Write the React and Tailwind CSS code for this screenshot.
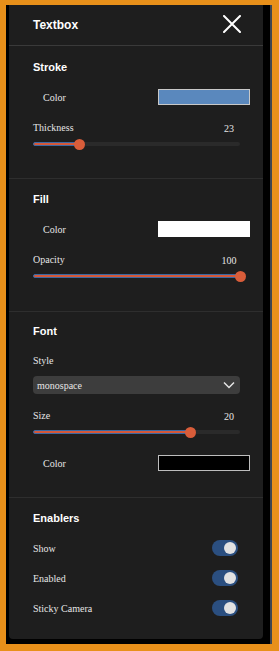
import React from 'react';

const serif = { fontFamily: '"Liberation Serif", "Times New Roman", serif' };

const Slider = ({ pct }) => (
  <div className="relative mr-[23px] h-[12px] flex items-center">
    <div className="h-[4px] w-full rounded-full bg-[#2a2a2a]" />
    <div
      className="absolute left-0 h-[4px] rounded-full bg-[#d4583a] border border-[#3b68a3]"
      style={{ width: `${pct}%` }}
    />
    <div
      className="absolute h-[11px] w-[11px] -ml-[5.5px] rounded-full bg-[#d95d3a]"
      style={{ left: `${pct}%` }}
    />
  </div>
);

const ColorRow = ({ color, border }) => (
  <div className="flex items-center justify-between h-[16px] pl-[10px] pr-[13px]">
    <span className="text-[10px] text-[#e6e6e6]" style={serif}>Color</span>
    <div className={`w-[92px] h-[16px] border ${border}`} style={{ backgroundColor: color }} />
  </div>
);

const ValueRow = ({ label, value }) => (
  <div className="flex items-center justify-between h-[16px] pr-[19px]">
    <span className="text-[10px] text-[#e6e6e6]" style={serif}>{label}</span>
    <span className="w-[30px] text-center text-[10px] text-[#e6e6e6] mt-[2px]" style={serif}>{value}</span>
  </div>
);

const Title = ({ children }) => (
  <div className="h-[16px] flex items-center text-[11px] font-bold text-white">{children}</div>
);

const Toggle = () => (
  <div className="w-[26px] h-[16px] rounded-full bg-[#2b4f80] flex items-center justify-end pr-[2px] mr-[25px]">
    <div className="w-[12px] h-[12px] rounded-full bg-[#e2e2e2]" />
  </div>
);

const ToggleRow = ({ label }) => (
  <div className="flex items-center justify-between h-[16px]">
    <span className="text-[10px] text-[#e6e6e6]" style={serif}>{label}</span>
    <Toggle />
  </div>
);

export default function App() {
  return (
    <div
      className="w-[279px] h-[651px] bg-[#e8901a] pl-[6px] pt-[5px]"
      style={{ fontFamily: '"Liberation Sans", Arial, sans-serif' }}
    >
      <div className="w-[266px] h-[639px] bg-black border-r-2 border-[#3d4550] pl-[3px]">
        <div className="w-[254px] h-[634px] bg-[#1e1e1e] rounded-b-[4px] flex flex-col">
          {/* Header */}
          <div className="h-[41px] border-b border-[#3a3a3a] flex items-center justify-between pl-[24px] pr-[22px] shrink-0">
            <span className="text-[12px] font-bold text-white">Textbox</span>
            <svg width="18" height="18" viewBox="0 0 18 18" className="mt-[-3px]">
              <path d="M1 1 L17 17 M17 1 L1 17" stroke="#ffffff" strokeWidth="2" strokeLinecap="round" />
            </svg>
          </div>

          {/* Stroke */}
          <div className="h-[133px] border-b border-[#2e2e2e] pl-[24px] pt-[13px] shrink-0">
            <Title>Stroke</Title>
            <div className="mt-[14px]"><ColorRow color="#5a88bd" border="border-[#c8c8c8]" /></div>
            <div className="mt-[14px]"><ValueRow label="Thickness" value="23" /></div>
            <div className="mt-[3px]"><Slider pct={22.5} /></div>
          </div>

          {/* Fill */}
          <div className="h-[133px] border-b border-[#2e2e2e] pl-[24px] pt-[12px] shrink-0">
            <Title>Fill</Title>
            <div className="mt-[14px]"><ColorRow color="#ffffff" border="border-[#ffffff]" /></div>
            <div className="mt-[14px]"><ValueRow label="Opacity" value="100" /></div>
            <div className="mt-[3px]"><Slider pct={100} /></div>
          </div>

          {/* Font */}
          <div className="h-[186px] border-b border-[#2e2e2e] pl-[24px] pt-[11px] shrink-0">
            <Title>Font</Title>
            <div className="mt-[13px] h-[16px] flex items-center">
              <span className="text-[10px] text-[#e6e6e6]" style={serif}>Style</span>
            </div>
            <div className="mt-[8px] mr-[23px] h-[18px] rounded-[4px] bg-[#3d3d3d] flex items-center justify-between pl-[4px] pr-[5px]">
              <span className="text-[10px] text-[#e6e6e6]" style={serif}>monospace</span>
              <svg width="12" height="8" viewBox="0 0 12 8">
                <path d="M1 1.5 L6 6.5 L11 1.5" stroke="#e6e6e6" strokeWidth="1.5" fill="none" />
              </svg>
            </div>
            <div className="mt-[13px]"><ValueRow label="Size" value="20" /></div>
            <div className="mt-[3px]"><Slider pct={76} /></div>
            <div className="mt-[17px]"><ColorRow color="#000000" border="border-[#bdbdbd]" /></div>
          </div>

          {/* Enablers */}
          <div className="flex-1 pl-[24px] pt-[12px]">
            <Title>Enablers</Title>
            <div className="mt-[14px] flex flex-col gap-[14px]">
              <ToggleRow label="Show" />
              <ToggleRow label="Enabled" />
              <ToggleRow label="Sticky Camera" />
            </div>
          </div>
        </div>
      </div>
    </div>
  );
}
